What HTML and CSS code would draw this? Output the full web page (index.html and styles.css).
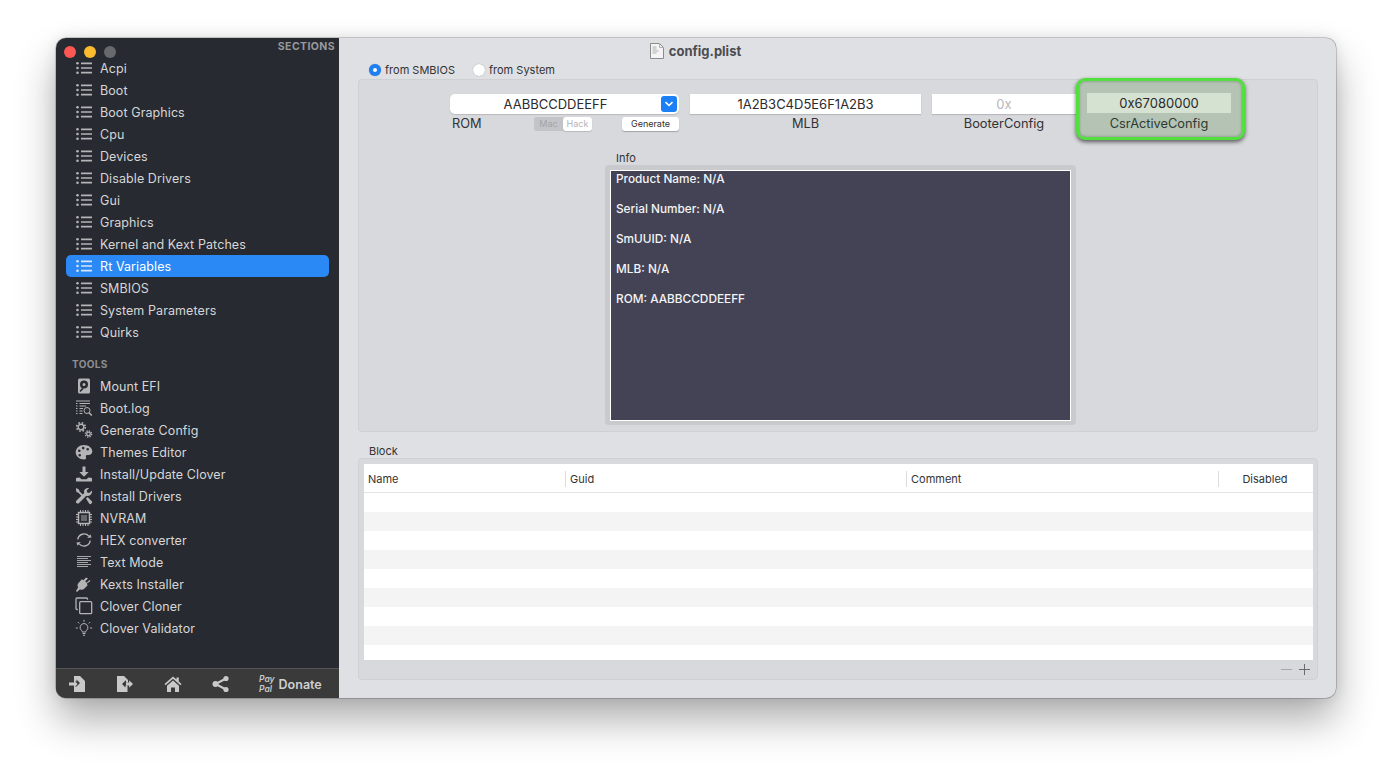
FILE: index.html
```html
<!DOCTYPE html>
<html lang="en">
<head>
<meta charset="utf-8">
<title>config.plist</title>
<link rel="stylesheet" href="styles.css">
</head>
<body>
<svg class="defs" width="0" height="0" aria-hidden="true">
  <symbol id="list" viewBox="0 0 18 18">
    <g fill="currentColor"><circle cx="2.500" cy="4.300" r="1.300"/><circle cx="2.500" cy="9" r="1.300"/><circle cx="2.500" cy="13.700" r="1.300"/></g>
    <path d="M6 4.300h11M6 9h11M6 13.700h11" stroke="currentColor" stroke-width="1.700" fill="none"/>
  </symbol>
</svg>
<div class="window">
  <aside class="sidebar">
    <div class="side-head">
      <span class="light red"></span><span class="light yellow"></span><span class="light grey"></span>
      <span class="sections">SECTIONS</span>
    </div>
    <ul class="menu">
      <li class="item"><svg class="ico"><use href="#list"/></svg><span>Acpi</span></li>
      <li class="item"><svg class="ico"><use href="#list"/></svg><span>Boot</span></li>
      <li class="item"><svg class="ico"><use href="#list"/></svg><span>Boot Graphics</span></li>
      <li class="item"><svg class="ico"><use href="#list"/></svg><span>Cpu</span></li>
      <li class="item"><svg class="ico"><use href="#list"/></svg><span>Devices</span></li>
      <li class="item"><svg class="ico"><use href="#list"/></svg><span>Disable Drivers</span></li>
      <li class="item"><svg class="ico"><use href="#list"/></svg><span>Gui</span></li>
      <li class="item"><svg class="ico"><use href="#list"/></svg><span>Graphics</span></li>
      <li class="item"><svg class="ico"><use href="#list"/></svg><span>Kernel and Kext Patches</span></li>
      <li class="item active"><svg class="ico"><use href="#list"/></svg><span>Rt Variables</span></li>
      <li class="item"><svg class="ico"><use href="#list"/></svg><span>SMBIOS</span></li>
      <li class="item"><svg class="ico"><use href="#list"/></svg><span>System Parameters</span></li>
      <li class="item"><svg class="ico"><use href="#list"/></svg><span>Quirks</span></li>
    </ul>
    <div class="tools-label">TOOLS</div>
    <ul class="menu">
      <li class="item"><svg class="ico" viewBox="0 0 18 18"><path fill-rule="evenodd" fill="currentColor" d="M4.500 1.500h9A1.500 1.500 0 0 1 15 3v12a1.500 1.500 0 0 1-1.500 1.500h-9A1.500 1.500 0 0 1 3 15V3a1.500 1.500 0 0 1 1.500-1.500zM9 3.500a4 4 0 1 0 0 8 4 4 0 0 0 0-8zM9 6a1.500 1.500 0 1 1 0 3 1.500 1.500 0 0 1 0-3zM7 11l-2.500 3 1 1 3-3z"/></svg><span>Mount EFI</span></li>
      <li class="item"><svg class="ico" viewBox="0 0 18 18"><g fill="none" stroke="currentColor"><path d="M1 2h14M1 4.500h1.500M4.500 4.500H15M1 7h1.500M4.500 7H11M1 9.500h1.500M4.500 9.500H8M1 12h1.500M4.500 12H7.500M1 14.500h1.500M4.500 14.500h3"/><circle cx="12" cy="11.500" r="3"/><path d="M14 13.700l2.800 2.800" stroke-width="1.600"/></g></svg><span>Boot.log</span></li>
      <li class="item"><svg class="ico" viewBox="0 0 18 18"><g fill="none" stroke="currentColor"><circle cx="6" cy="6" r="2.800" stroke-width="1.400"/><circle cx="6" cy="6" r="4.300" stroke-width="1.600" stroke-dasharray="1.700 1.700"/><circle cx="13.500" cy="13" r="1.800" stroke-width="1.300"/><circle cx="13.500" cy="13" r="3.100" stroke-width="1.400" stroke-dasharray="1.300 1.130"/></g></svg><span>Generate Config</span></li>
      <li class="item"><svg class="ico" viewBox="0 0 18 18"><path fill-rule="evenodd" fill="currentColor" d="M9 2c4.700 0 8.300 2.900 8.300 6.600 0 2.600-2.200 3.700-4.200 3.400-1.500-.2-2.600.3-2.200 1.700.4 1.300.2 2.800-1.700 2.800C4.300 16.500.7 13.200.7 9.300.7 5.200 4.400 2 9 2zM8.200 3.800a1.300 1.300 0 1 0 0 2.600 1.300 1.300 0 0 0 0-2.600zM12.700 5a1.300 1.300 0 1 0 0 2.600 1.300 1.300 0 0 0 0-2.600zM4.300 6.500a1.300 1.300 0 1 0 0 2.600 1.300 1.300 0 0 0 0-2.600zM4.700 11a1.300 1.300 0 1 0 0 2.600 1.300 1.300 0 0 0 0-2.600z"/></svg><span>Themes Editor</span></li>
      <li class="item"><svg class="ico" viewBox="0 0 18 18"><path fill="currentColor" d="M7.500 1.500h3v5.500h3.200L9 11.800 4.300 7h3.200zM1 13l3.500-.5 2 1.700h5l2-1.700L17 13v3.500H1z"/></svg><span>Install/Update Clover</span></li>
      <li class="item"><svg class="ico" viewBox="0 0 18 18"><path fill="currentColor" d="M16.800 3.600l-2.600 2.500-2-.5-.5-2 2.500-2.500c-2-.6-4.300.3-5 2.300-.3 1-.2 1.900.1 2.700L1.500 13.400c-.8.800-.8 1.900 0 2.600.7.800 1.800.8 2.600 0l7.200-7.200c2.500.7 5-.6 5.600-3 .1-.8.100-1.500-.1-2.200z"/><path fill="currentColor" d="M1.300 1l2.800 1.700.3 1.500 4 4-1.300 1.300-4-4-1.500-.3L.9 2.500zM11 11.500l1.500-1.500 4.300 4.300c.5.500.5 1.300 0 1.800l-.7.700c-.5.500-1.300.5-1.800 0z"/></svg><span>Install Drivers</span></li>
      <li class="item"><svg class="ico" viewBox="0 0 18 18"><g fill="none" stroke="currentColor"><rect x="3.500" y="3.500" width="11" height="11" stroke-width="1.500"/><rect x="6" y="6" width="6" height="6" fill="currentColor" fill-opacity=".45" stroke="none"/><path d="M5.500 1v2M8 1v2M10.500 1v2M13 1v2M5.500 15v2M8 15v2M10.500 15v2M13 15v2M1 5.500h2M1 8h2M1 10.500h2M1 13h2M15 5.500h2M15 8h2M15 10.500h2M15 13h2"/></g></svg><span>NVRAM</span></li>
      <li class="item"><svg class="ico" viewBox="0 0 18 18"><g fill="none" stroke="currentColor" stroke-width="1.400"><path d="M2.800 8.500a6.300 6.300 0 0 1 11-3.400"/><path d="M15.200 9.500a6.300 6.300 0 0 1-11 3.400"/></g><path fill="currentColor" d="M16.500 6.500l-4.300.6 3.300-3.800zM1.500 11.500l4.300-.6-3.300 3.800z"/></svg><span>HEX converter</span></li>
      <li class="item"><svg class="ico" viewBox="0 0 18 18"><path fill="none" stroke="currentColor" stroke-width=".9" d="M2 3.500h14M2 5.500h11M2 7.500h14M2 9.500h11M2 11.500h14M2 13.500h11"/></svg><span>Text Mode</span></li>
      <li class="item"><svg class="ico" viewBox="0 0 18 18"><path fill="currentColor" d="M11 2.500l-2.600 2.800-1.500-1-3.400 3.600c-1.200 1.300-1.200 3.100-.3 4.300L1 16l1 1 3-2.800c1.200.9 3 .8 4.200-.4l3.500-3.500-1-1.500L15.500 6l-1-1-2.800 2.700-1.500-1.500 2.800-2.700z"/></svg><span>Kexts Installer</span></li>
      <li class="item"><svg class="ico" viewBox="0 0 18 18"><g fill="none" stroke="currentColor" stroke-width="1.300"><path d="M12.500 2.800V2a1 1 0 0 0-1-1H2a1 1 0 0 0-1 1v9.500a1 1 0 0 0 1 1h.8"/><rect x="4.700" y="4.700" width="12" height="12" rx="1"/></g></svg><span>Clover Cloner</span></li>
      <li class="item"><svg class="ico" viewBox="0 0 18 18"><g fill="none" stroke="currentColor"><path d="M9 4.500a4 4 0 0 1 2.300 7.200c-.5.400-.6.900-.6 1.300H7.300c0-.4-.1-.9-.6-1.300A4 4 0 0 1 9 4.500z"/><path d="M7.500 14.500h3M8 16.300h2M9 .8v2M2.800 3l1.400 1.400M15.200 3l-1.400 1.400M.8 9h2M15.200 9h2"/></g></svg><span>Clover Validator</span></li>
    </ul>
    <div class="side-foot">
      <svg class="foot-ico" viewBox="0 0 18 18"><path fill="currentColor" d="M6 1h6l5 5v11H6v-5.500h2.500L12 8 8.500 4.500v2H6z"/><path fill="currentColor" d="M1 7.500h5v-2.200L9.600 9 6 12.700v-2.200H1z"/></svg>
      <svg class="foot-ico" viewBox="0 0 18 18"><path fill="currentColor" d="M1 1h7l4 4v2.500h-2v-2h-.5L6 9l3.500 3.500v-2h2v3l0 3.500H1z"/><path fill="currentColor" d="M17 9l-3.800-3.800v2.300H10v3h3.200v2.300z"/></svg>
      <svg class="foot-ico" viewBox="0 0 18 18"><path fill="currentColor" d="M9 1.500l3.500 3V2.500h2.300v4.100L17.500 9l-1 1.200L9 3.800 1.500 10.200l-1-1.200zM9 5.500l6 5.200V17h-4v-4.500H7V17H3v-6.300z"/></svg>
      <svg class="foot-ico" viewBox="0 0 18 18"><g fill="currentColor"><circle cx="14" cy="3.500" r="2.600"/><circle cx="14" cy="14.500" r="2.600"/><circle cx="3.500" cy="9" r="3"/></g><path stroke="currentColor" stroke-width="2" d="M14 3.500L3.500 9l10.500 5.500" fill="none"/></svg>
      <span class="paypal"><i>Pay</i><i>Pal</i></span>
      <span class="donate">Donate</span>
    </div>
  </aside>

  <main class="main">
    <div class="titlebar">
      <svg class="doc" viewBox="0 0 14 16"><path fill="#f4f4f4" stroke="#8c8c8c" d="M.5.500h9l4 4v11H.5z"/><path fill="none" stroke="#b0b0b0" d="M9.500.500v4h4M2.500 4h4M2.500 6h4M2.500 8h6M2.500 10h4"/></svg>
      <span class="title">config.plist</span>
    </div>
    <div class="radios">
      <label class="radio"><span class="dot on"></span>from SMBIOS</label>
      <label class="radio"><span class="dot"></span>from System</label>
    </div>

    <section class="panel upper">
      <div class="fields">
        <div class="field rom">
          <div class="combo"><span class="combo-val">AABBCCDDEEFF</span>
            <span class="combo-btn"><svg viewBox="0 0 10 6" width="10" height="6"><path d="M1.500 1.200L5 4.500l3.500-3.300" fill="none" stroke="#fff" stroke-width="1.600"/></svg></span>
          </div>
          <div class="rom-sub">
            <span class="rom-label">ROM</span>
            <span class="segment"><span class="seg off">Mac</span><span class="seg sel">Hack</span></span>
            <button class="gen">Generate</button>
          </div>
        </div>
        <div class="field mlb">
          <div class="input">1A2B3C4D5E6F1A2B3</div>
          <div class="cap">MLB</div>
        </div>
        <div class="field booter">
          <div class="input ph">0x</div>
          <div class="cap">BooterConfig</div>
        </div>
        <div class="field csr">
          <div class="input tinted">0x67080000</div>
          <div class="cap">CsrActiveConfig</div>
        </div>
      </div>
      <div class="info-cap">Info</div>
      <div class="info-frame">
        <div class="info">
          <p>Product Name: N/A</p>
          <p>Serial Number: N/A</p>
          <p>SmUUID: N/A</p>
          <p>MLB: N/A</p>
          <p>ROM: AABBCCDDEEFF</p>
        </div>
      </div>
    </section>

    <div class="block-cap">Block</div>
    <section class="panel lower">
      <div class="table">
        <div class="thead">
          <span class="th">Name</span><span class="th sep">Guid</span><span class="th sep">Comment</span><span class="th sep center">Disabled</span>
        </div>
        <div class="row"></div><div class="row alt"></div>
        <div class="row"></div><div class="row alt"></div>
        <div class="row"></div><div class="row alt"></div>
        <div class="row"></div><div class="row alt"></div>
      </div>
      <div class="table-tools">
        <svg class="minus" viewBox="0 0 11 11" width="11" height="11"><path d="M0 5.500h11" stroke="#a8a8aa"/></svg>
        <svg class="plus" viewBox="0 0 11 11" width="11" height="11"><path d="M0 5.500h11M5.500 0v11" stroke="#6c6c6e"/></svg>
      </div>
    </section>
  </main>
</div>
</body>
</html>
```

FILE: styles.css
```css
* { box-sizing: border-box; }
html, body { margin: 0; height: 100%; }
body {
  background: #fff;
  padding: 38px 56px 74px;
  font-family: Inter, "Noto Sans", sans-serif;
  overflow: hidden;
}
.defs { position: absolute; }
ul { list-style: none; margin: 0; padding: 0; }
p { margin: 0; }

.window {
  display: flex;
  width: 1280px;
  height: 660px;
  border-radius: 10px;
  overflow: hidden;
  background: #dfe0e4;
  box-shadow: 0 0 0 .5px rgba(0,0,0,.35), 0 22px 40px rgba(0,0,0,.32), 0 0 14px rgba(0,0,0,.1);
}

/* sidebar */
.sidebar {
  width: 283px;
  flex: none;
  display: flex;
  flex-direction: column;
  background: #272a31;
  color: #d9d9da;
}
.side-head {
  height: 19px;
  display: flex;
  padding: 8px 4px 0 8px;
  gap: 8px;
  position: relative;
}
.light { width: 12px; height: 12px; border-radius: 50%; flex: none; }
.red { background: #fc5753; }
.yellow { background: #fdbc2e; }
.grey { background: #68696c; }
.sections {
  margin: -5px 0 0 auto;
  font-size: 10.500px;
  line-height: 12px;
  font-weight: 700;
  letter-spacing: .4px;
  color: #98999c;
}
.item {
  height: 22px;
  display: flex;
  align-items: center;
  gap: 7px;
  padding-left: 19px;
  font-size: 12.500px;
  letter-spacing: .09px;
  color: #d6d6d7;
  white-space: nowrap;
}
.item .ico { width: 18px; height: 18px; flex: none; color: #b4b4b6; }
.item.active {
  margin: 0 10px;
  padding-left: 9px;
  border-radius: 5px;
  background: #2a89f5;
  color: #fff;
}
.item.active .ico { color: #d7e6f9; }
.tools-label {
  padding: 14px 0 4px 16px;
  font-size: 10px;
  line-height: 14px;
  font-weight: 700;
  letter-spacing: .35px;
  color: #8f9094;
}
.side-foot {
  margin-top: auto;
  height: 30px;
  background: #3a3a3a;
  border-top: 1px solid #545454;
  display: flex;
  align-items: center;
  padding-left: 12px;
  color: #c9c9c9;
}
.foot-ico { width: 18px; height: 18px; flex: none; margin-right: 30px; }
.foot-ico:nth-child(4) { margin-right: 29px; }
.paypal {
  display: flex;
  flex-direction: column;
  font-size: 8.500px;
  line-height: 10px;
  font-weight: 600;
  color: #c9c9c9;
  margin-right: 4px;
  padding-top: 1px;
}
.donate { font-size: 12.500px; font-weight: 600; color: #d0d0d0; padding-top: 2px; }

/* main */
.main {
  flex: 1;
  min-width: 0;
  display: flex;
  flex-direction: column;
  padding-left: 19px;
  padding-right: 18px;
  padding-bottom: 18px;
  color: #2d2d30;
}
.titlebar {
  height: 23px;
  display: flex;
  align-items: center;
  justify-content: center;
  gap: 5px;
  padding-right: 285px;
  padding-top: 3px;
}
.doc { width: 14px; height: 16px; }
.title { font-size: 13px; font-weight: 700; color: #4c4c50; }
.radios {
  height: 18px;
  display: flex;
  gap: 18px;
  padding-left: 11px;
  align-items: center;
}
.radio { display: flex; align-items: center; gap: 4px; font-size: 11px; color: #333; }
.dot {
  width: 12px;
  height: 12px;
  border-radius: 50%;
  background: #fff;
  box-shadow: 0 0 1px rgba(0,0,0,.4);
}
.dot.on { background: #1e80f5; display: flex; align-items: center; justify-content: center; }
.dot.on::after { content: ""; width: 4px; height: 4px; border-radius: 50%; background: #fff; }

.panel {
  background: #d8d9dd;
  border: 1px solid #cfd0d4;
  border-radius: 4px;
}
.upper { height: 353px; padding-top: 14px; }
.fields {
  display: flex;
  gap: 11px;
  padding-left: 91px;
  font-size: 12.800px;
}
.field { display: flex; flex-direction: column; flex: none; }
.rom { width: 229px; }
.mlb { width: 231px; }
.booter, .csr { width: 144px; }
.input {
  height: 20px;
  background: #fff;
  text-align: center;
  line-height: 20px;
  font-size: 13px;
  color: #2a2a2c;
  box-shadow: 0 1px 1px rgba(0,0,0,.14);
}
.input.ph { color: #b9b9bb; }
.cap { text-align: center; line-height: 20px; color: #323234; }
.combo {
  height: 20px;
  background: #fff;
  border-radius: 5px;
  display: flex;
  align-items: center;
  padding-right: 2px;
  box-shadow: 0 1px 1px rgba(0,0,0,.14);
}
.combo-val { flex: 1; text-align: center; font-size: 13px; color: #2a2a2c; }
.combo-btn {
  width: 16px;
  height: 16px;
  border-radius: 3px;
  background: #1b7ff5;
  display: flex;
  align-items: center;
  justify-content: center;
}
.rom-sub { display: flex; align-items: center; height: 18px; margin-bottom: 2px; }
.rom-label { width: 84px; padding-left: 2px; color: #323234; }
.segment {
  width: 58px;
  height: 14px;
  border-radius: 3px;
  background: #c3c4c8;
  display: flex;
  margin-top: 2px;
  font-size: 9px;
  line-height: 14px;
  text-align: center;
}
.seg { flex: 1; }
.seg.off { color: #a3a4a8; }
.seg.sel { background: #fff; color: #b5b5b7; border-radius: 3px; box-shadow: 0 1px 1px rgba(0,0,0,.15); }
.gen {
  margin: 2px 0 0 30px;
  width: 57px;
  height: 14px;
  padding: 0;
  border: 0;
  border-radius: 3px;
  background: #fff;
  font: 400 9px/14px Inter, sans-serif;
  color: #2f2f31;
  box-shadow: 0 1px 1px rgba(0,0,0,.25);
}
.csr { position: relative; z-index: 0; margin-top: -1px; }
.csr::before {
  content: "";
  position: absolute;
  z-index: -1;
  inset: -15px -14px -5px -11px;
  background: #b4c3b4;
  border: 3px solid #52e03f;
  border-radius: 9px;
  box-shadow: 0 2px 4px rgba(0,0,0,.6), inset 0 0 3px rgba(0,0,0,.35);
}
.input.tinted { background: #d5e2d2; box-shadow: none; }
.csr .cap { line-height: 22px; color: #2f3a30; }
.info-cap {
  margin: 17px 0 0 257px;
  font-size: 11px;
  line-height: 13px;
  height: 13px;
  color: #333;
}
.info-frame {
  margin: 0 0 0 246px;
  width: 471px;
  height: 260px;
  padding: 5px 5px 4px 5px;
  background: #c9cace;
  border-radius: 4px;
}
.info {
  height: 100%;
  background: #434355;
  border: 1px solid #fff;
  padding: 1px 5px 0;
  color: #f4f4f6;
  font-size: 11.800px;
  font-weight: 500;
  line-height: 14px;
}
.info p { margin-bottom: 16px; }

.block-cap {
  height: 26px;
  padding: 12px 0 0 11px;
  font-size: 11px;
  line-height: 14px;
  color: #333;
}
.lower {
  flex: 1;
  min-height: 0;
  padding: 5px 4px 0 5px;
  display: flex;
  flex-direction: column;
}
.table { height: 196px; background: #fff; flex: none; }
.thead {
  height: 29px;
  display: grid;
  grid-template-columns: 201px 341px 312px 1fr;
  align-items: center;
  padding-top: 1px;
  border-bottom: 1px solid #e4e4e5;
  font-size: 11px;
  color: #333;
}
.th { padding-left: 4px; line-height: 16px; }
.th.sep { border-left: 1px solid #dcdcdd; }
.th.center { text-align: center; padding-right: 6px; }
.row { height: 19px; }
.row.alt { background: #f3f4f3; }
.table-tools {
  flex: 1;
  display: flex;
  align-items: center;
  justify-content: flex-end;
  gap: 7px;
  padding-right: 3px;
}
```
